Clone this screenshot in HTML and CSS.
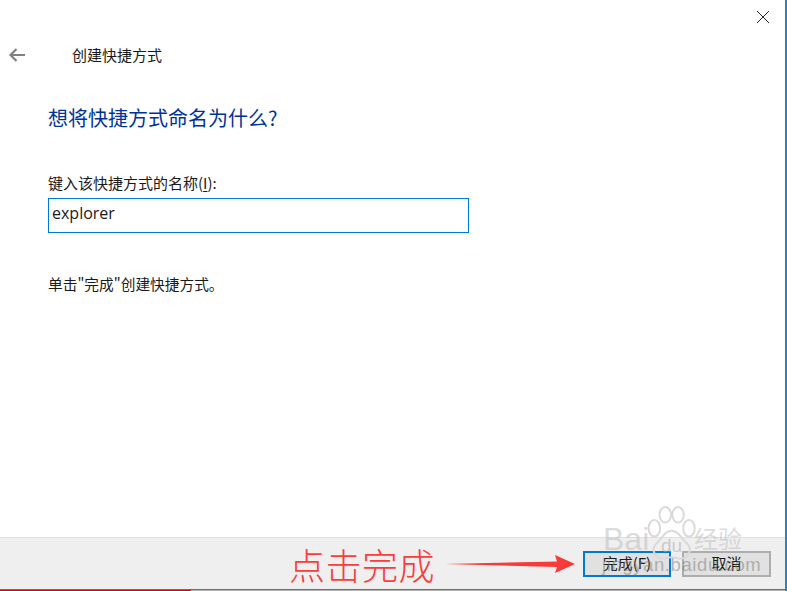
FILE: index.html
```
<!DOCTYPE html>
<html lang="zh">
<head>
<meta charset="utf-8">
<title>创建快捷方式</title>
<link rel="stylesheet" href="styles.css">
</head>
<body>
<div class="window">
  <main class="content">
    <div class="titlebar">
      <svg class="close" width="14" height="14" viewBox="0 0 14 14"><path d="M1 1L13 13M13 1L1 13" stroke="#222" stroke-width="1" fill="none"/></svg>
    </div>
    <div class="navbar">
      <svg class="back" width="16" height="14" viewBox="0 0 16 14"><path d="M7.500 1L1.500 7L7.500 13M1.500 7H16" stroke="#808080" stroke-width="2.200" fill="none"/></svg>
      <span class="wizard-title">创建快捷方式</span>
    </div>
    <div class="body">
      <h1 class="heading">想将快捷方式命名为什么?</h1>
      <label class="label" for="name">键入该快捷方式的名称(<u>I</u>):</label>
      <input class="name-input" id="name" type="text" value="explorer">
      <p class="hint">单击"完成"创建快捷方式。</p>
    </div>
  </main>
  <footer class="footer">
    <span class="annotation">点击完成</span>
    <svg class="arrow" width="131" height="22" viewBox="0 0 131 22"><path d="M0 11L112 8.500L110 2L130 11L110 20L112 14Z" fill="#f73a3a"/></svg>
    <button class="btn btn-primary" type="button">完成(F)</button>
    <button class="btn" type="button">取消</button>
  </footer>
  <div class="taskbar"><div class="taskbar-progress"></div></div>
  <div class="watermark">
    <svg class="paw" width="50" height="56" viewBox="0 0 78 86"><g fill="none" stroke="#d9d9d9" stroke-width="3"><ellipse cx="13" cy="34" rx="9" ry="13"/><ellipse cx="30" cy="13" rx="9" ry="12"/><ellipse cx="50" cy="13" rx="9" ry="12"/><ellipse cx="67" cy="34" rx="9" ry="13"/><path d="M40 38C28 38 24 52 16 58C6 68 16 84 30 81C36 79 44 79 50 81C64 84 74 68 64 58C56 52 52 38 40 38Z"/></g></svg>
    <span class="wm-bai">Bai</span>
    <span class="wm-du">du</span>
    <span class="wm-jy">经验</span>
    <span class="wm-url">jingyan.baidu.com</span>
  </div>
</div>
</body>
</html>
```

FILE: styles.css
```
* { box-sizing: border-box; }
html, body { margin: 0; padding: 0; }
body {
  width: 787px;
  height: 591px;
  overflow: hidden;
  background: #fff;
  color: #1a1a1a;
  font-family: "Noto Sans CJK SC", "Open Sans", sans-serif;
}
.window {
  position: relative;
  width: 787px;
  height: 591px;
  display: flex;
  flex-direction: column;
  border-right: 2px solid #2f7fc4;
}
.content { flex: 1; min-height: 0; display: flex; flex-direction: column; }
.titlebar { height: 34px; display: flex; justify-content: flex-end; padding: 10px 15px 0 0; }
.navbar { height: 42px; display: flex; align-items: center; padding-left: 9px; }
.back { margin-right: 47px; }
.wizard-title { font-size: 15px; line-height: 20px; }
.body { padding: 0 0 0 48px; display: flex; flex-direction: column; align-items: flex-start; }
.heading { margin: 16px 0 0; font-size: 20px; font-weight: 400; line-height: 52px; height: 52px; color: #003399; }
.label { margin-top: 29px; font-size: 15px; line-height: 20px; height: 25px; }
.label u { text-underline-offset: 2px; }
.name-input {
  display: block;
  width: 421px;
  height: 35px;
  padding: 0 3px 6px;
  border: 1.500px solid #0078d7;
  outline: none;
  border-radius: 0;
  color: #1a1a1a;
  font-family: "Open Sans", sans-serif;
  font-size: 16px;
}
.hint { margin: 41px 0 0; font-size: 14.700px; line-height: 20px; }
.footer {
  height: 52px;
  flex: none;
  display: flex;
  align-items: center;
  padding: 0 14px 0 289px;
  background: #efefef;
  border-top: 1px solid #dfdfdf;
}
.annotation {
  width: 156px;
  font-size: 36px;
  font-weight: 300;
  line-height: 40px;
  letter-spacing: .5px;
  white-space: nowrap;
  color: #fb3c3c;
}
.arrow { flex: none; margin-right: 7px; }
.btn {
  width: 89px;
  height: 26px;
  padding: 0 0 2px;
  margin-left: 11px;
  background: #e1e1e1;
  border: 2px solid #adadad;
  border-radius: 0;
  font-family: inherit;
  font-size: 15px;
  line-height: 20px;
  color: #1a1a1a;
}
.btn-primary { margin-left: 0; border-color: #0078d7; }
.taskbar { height: 2px; flex: none; background: #b5b5b5; border-top: 1px solid #2f7fc4; }
.taskbar-progress { width: 191px; height: 1px; background: #c00d0d; }
.watermark { position: absolute; left: 600px; top: 505px; width: 185px; height: 84px; pointer-events: none; }
.paw { position: absolute; left: 46px; top: 1px; }
.watermark span { position: absolute; white-space: nowrap; font-family: "Liberation Sans", sans-serif; }
.wm-bai { left: 3px; top: 16px; font-size: 32px; line-height: 36px; color: rgba(190,190,190,.55); }
.wm-du { left: 61px; top: 30px; font-size: 19px; line-height: 22px; color: rgba(170,170,170,.55); }
.watermark .wm-jy { left: 94px; top: 18px; font-size: 24px; line-height: 30px; color: rgba(190,190,190,.55); font-family: "Noto Sans CJK SC", sans-serif; }
.wm-url { left: 2px; top: 50px; font-size: 18.500px; line-height: 20px; letter-spacing: .6px; color: rgba(120,120,120,.5); }
```
